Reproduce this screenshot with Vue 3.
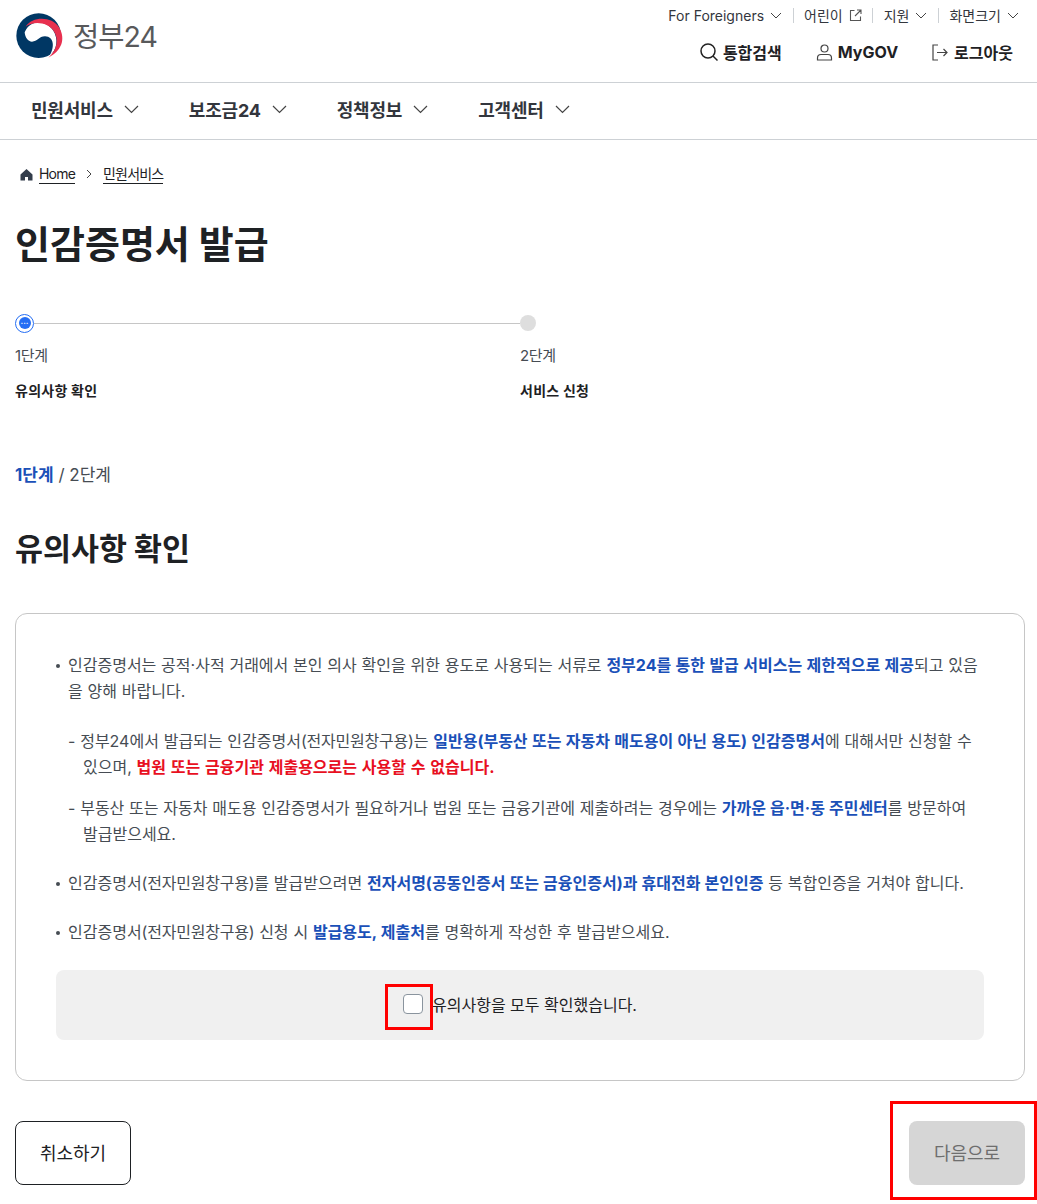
<script setup>
const nav = ['민원서비스', '보조금24', '정책정보', '고객센터']
</script>

<template>
  <div class="page">
    <header class="head">
      <div class="logo">
        <svg width="60" height="56" viewBox="0 0 180 168" class="mark">
          <circle cx="89" cy="83" r="67" fill="#003764"/>
          <path d="M47 73C52 60 60 52 70 47 92 38 118 45 133 68 148 92 146 124 120 146 138 120 136 85 108 85 90 85 85 101 69 101 57 101 48 88 47 73Z" fill="#fff"/>
          <path d="M50 56C70 25 128 24 150 58 172 95 156 130 118 149 146 125 150 93 134 69 116 43 75 38 50 56Z" fill="#e8304f"/>
        </svg>
        <span class="logotext">정부24</span>
      </div>
      <div class="util">
        <div class="util-top">
          <span class="ut">For Foreigners<svg width="12" height="7" viewBox="0 0 12 7"><path d="M1 1l5 5 5-5" fill="none" stroke="#444" stroke-width="1"/></svg></span>
          <i class="sep"></i>
          <span class="ut">어린이<svg width="13" height="13" viewBox="0 0 13 13"><path d="M5.500 1.500H1.500v10h10V7.500M8 1h4v4M12 1L6 7" fill="none" stroke="#555" stroke-width="1.100"/></svg></span>
          <i class="sep"></i>
          <span class="ut">지원<svg width="12" height="7" viewBox="0 0 12 7"><path d="M1 1l5 5 5-5" fill="none" stroke="#444" stroke-width="1"/></svg></span>
          <i class="sep"></i>
          <span class="ut">화면크기<svg width="12" height="7" viewBox="0 0 12 7"><path d="M1 1l5 5 5-5" fill="none" stroke="#444" stroke-width="1"/></svg></span>
        </div>
        <div class="util-bot">
          <span class="ub"><svg width="18" height="18" viewBox="0 0 18 18"><circle cx="8" cy="8" r="7" fill="none" stroke="#222" stroke-width="1.500"/><path d="M13 13l4.500 4.500" stroke="#222" stroke-width="1.500"/></svg>통합검색</span>
          <span class="ub"><svg width="17" height="17" viewBox="0 0 17 17"><circle cx="8.500" cy="4.500" r="3.500" fill="none" stroke="#444" stroke-width="1.200"/><path d="M1.500 16v-2c0-2 1.500-3.500 3.500-3.500h7c2 0 3.500 1.500 3.500 3.500v2z" fill="none" stroke="#444" stroke-width="1.200"/></svg>MyGOV</span>
          <span class="ub logout"><svg width="16" height="17" viewBox="0 0 16 17"><path d="M6 1H1v15h5M5 8.500h10M11.500 5L15 8.500 11.500 12" fill="none" stroke="#444" stroke-width="1.200"/></svg>로그아웃</span>
        </div>
      </div>
    </header>

    <nav class="nav">
      <span v-for="n in nav" :key="n" class="nav-item">{{ n }}<svg width="15" height="9" viewBox="0 0 15 9"><path d="M1 1l6.500 6.500L14 1" fill="none" stroke="#444" stroke-width="1.200"/></svg></span>
    </nav>

    <main class="main">
      <div class="crumb">
        <svg width="13" height="13" viewBox="0 0 13 13"><path d="M6.500 1L.5 6.500V12.500H5V9h3v3.500h4.500V6.500z" fill="#333d4b"/></svg>
        <a>Home</a>
        <svg width="7" height="10" viewBox="0 0 7 10" class="crumb-sep"><path d="M1 1l4 4-4 4" fill="none" stroke="#444" stroke-width="1"/></svg>
        <a>민원서비스</a>
      </div>

      <h1 class="title">인감증명서 발급</h1>

      <div class="steps">
        <div class="step first">
          <div class="track">
            <span class="dot-on"><b>···</b></span>
            <span class="line"></span>
          </div>
          <div class="num">1단계</div>
          <div class="name">유의사항 확인</div>
        </div>
        <div class="step">
          <div class="track"><span class="dot-off"></span></div>
          <div class="num">2단계</div>
          <div class="name">서비스 신청</div>
        </div>
      </div>

      <div class="progress"><b>1단계</b> / 2단계</div>

      <h2 class="sub">유의사항 확인</h2>

      <section class="card">
        <ul class="notes">
          <li class="lead">인감증명서는 공적·사적 거래에서 본인 의사 확인을 위한 용도로 사용되는 서류로 <b class="blue wide">정부24를 통한 발급 서비스는 제한적으로 제공</b>되고 있음을 양해 바랍니다.
            <div class="subs">
              <p>- 정부24에서 발급되는 인감증명서<span class="t">(전자민원창구용)</span>는 <b class="blue wide">일반용(부동산 또는 자동차 매도용이 아닌 용도) 인감증명서</b>에 대해서만 신청할 수 있으며, <b class="red">법원 또는 금융기관 제출용으로는 사용할 수 없습니다.</b></p>
              <p>- 부동산 또는 자동차 매도용 인감증명서가 필요하거나 법원 또는 금융기관에 제출하려는 경우에는 <b class="blue">가까운 읍·면·동 주민센터</b>를 방문하여 발급받으세요.</p>
            </div>
          </li>
          <li>인감증명서<span class="t">(전자민원창구용)</span>를 발급받으려면 <b class="blue">전자서명(공동인증서 또는 금융인증서)과 휴대전화 본인인증</b> 등 복합인증을 거쳐야 합니다.</li>
          <li>인감증명서<span class="t">(전자민원창구용)</span> 신청 시 <b class="blue">발급용도, 제출처</b>를 명확하게 작성한 후 발급받으세요.</li>
        </ul>
        <div class="agree">
          <label class="agree-in"><span class="check"><i class="redbox"></i></span>유의사항을 모두 확인했습니다.</label>
        </div>
      </section>

      <div class="actions">
        <button class="cancel">취소하기</button>
        <button class="next">다음으로<i class="redbox2"></i></button>
      </div>
    </main>
  </div>
</template>

<style>
html, body { margin: 0; background: #fff; }
</style>

<style scoped>
.page { width: 1037px; height: 1204px; overflow: hidden; font-family: Inter, "Noto Sans CJK KR", sans-serif; color: #1e2124; box-sizing: border-box; }
.head { height: 82px; border-bottom: 1px solid #cdd1d5; display: flex; justify-content: space-between; padding: 0 24px 0 9px; }
.logo { display: flex; align-items: flex-start; gap: 4px; padding-top: 8px; }
.mark { display: block; flex: none; }
.logotext { font-size: 28.500px; line-height: 56px; color: #58595b; letter-spacing: -1px; margin-top: 1px; }
.util { display: flex; flex-direction: column; align-items: flex-end; }
.util-top { display: flex; align-items: center; height: 16px; margin-top: 7px; margin-right: -6px; font-size: 14px; color: #33363d; }
.ut { display: flex; align-items: center; gap: 6px; white-space: nowrap; }
.sep { width: 1px; height: 15px; background: #cdd1d5; margin: 0 10.500px; }
.util-bot { display: flex; gap: 34px; margin-top: 15px; font-size: 16px; font-weight: 700; color: #1e2124; height: 28px; align-items: center; }
.ub { display: flex; align-items: center; gap: 5px; white-space: nowrap; }
.logout { gap: 6px; }
.nav { height: 52px; padding-bottom: 4px; border-bottom: 1px solid #cdd1d5; display: flex; gap: 50px; padding-left: 31px; align-items: center; }
.nav-item { display: flex; align-items: center; gap: 11px; font-size: 18px; letter-spacing: -.2px; font-weight: 700; color: #33363d; white-space: nowrap; }
.main { padding: 0 12px 0 15px; }
.crumb { display: flex; align-items: center; height: 24px; margin-top: 22px; padding-left: 5px; font-size: 14px; letter-spacing: -.8px; }
.crumb a { border-bottom: 1px solid #1e2124; line-height: 18px; margin-left: 6px; }
.crumb-sep { margin-left: 11px; margin-right: 4px; }
.title { margin: 33px 0 0; font-size: 38px; line-height: 50px; font-weight: 700; }
.steps { display: flex; margin-top: 44px; }
.step { width: 505px; flex: none; }
.track { display: flex; align-items: center; height: 20px; }
.dot-on { width: 17px; height: 17px; border: 1.500px solid #256ef4; border-radius: 50%; display: flex; align-items: center; justify-content: center; flex: none; position: relative; }
.dot-on::before { content: ""; position: absolute; width: 12px; height: 12px; border-radius: 50%; background: #256ef4; }
.dot-on b { position: relative; color: #fff; font-size: 8px; line-height: 1; }
.line { flex: 1; height: 1px; background: #c6c6c6; }
.dot-off { width: 16px; height: 16px; border-radius: 50%; background: #dedede; }
.num { margin-top: 12px; font-size: 15px; line-height: 22px; color: #464c53; letter-spacing: -.3px; }
.name { margin-top: 13px; font-size: 14px; line-height: 22px; font-weight: 700; letter-spacing: .25px; }
.progress { margin-top: 61px; font-size: 17px; line-height: 24px; color: #464c53; }
.progress b { color: #1a50b8; }
.sub { margin: 40px 0 0; font-size: 30.400px; line-height: 44px; font-weight: 700; }
.card { margin-top: 42px; border: 1px solid #c6c6c6; border-radius: 12px; padding: 39px 40px 40px; height: 468px; box-sizing: border-box; }
.notes { list-style: none; margin: 0; padding: 0; font-size: 16px; line-height: 25.500px; color: #464c53; word-spacing: .3px; }
.notes li { position: relative; padding-left: 12px; margin-bottom: 23px; }
.notes .lead { margin-bottom: 24px; }
.notes li::before { content: ""; position: absolute; left: 0; top: 11px; width: 4px; height: 4px; border-radius: 50%; background: #464c53; }
.subs { margin-top: 25px; }
.subs p { margin: 0 0 16px; padding-left: 15px; text-indent: -15px; }
.t { letter-spacing: -.22px; }
.blue { color: #1a50b8; font-weight: 700; }
.wide { word-spacing: .6px; }
.red { color: #e8101f; font-weight: 700; word-spacing: 1px; }
.agree { height: 70px; margin-top: 25px; padding-bottom: 3px; box-sizing: border-box; background: #f0f0f0; border-radius: 8px; display: flex; align-items: center; justify-content: center; }
.agree-in { display: flex; align-items: center; font-size: 16px; color: #1e2124; }
.check { position: relative; width: 18px; height: 18px; background: #fff; border: 1px solid #8a949e; border-radius: 4px; margin-right: 9px; }
.redbox { position: absolute; left: -19px; top: -11px; width: 42px; height: 40px; border: 3px solid #f00; }
.actions { display: flex; justify-content: space-between; margin-top: 40px; }
.cancel, .next { height: 64px; width: 116px; padding: 0 0 2px; border-radius: 8px; font: inherit; font-size: 18px; cursor: pointer; position: relative; }
.cancel { background: #fff; border: 1px solid #1e2124; color: #1e2124; }
.next { background: #d6d6d6; border: none; color: #6e6e6e; }
.redbox2 { position: absolute; left: -19px; top: -20px; width: 141px; height: 93px; border: 3px solid #f00; }
</style>
